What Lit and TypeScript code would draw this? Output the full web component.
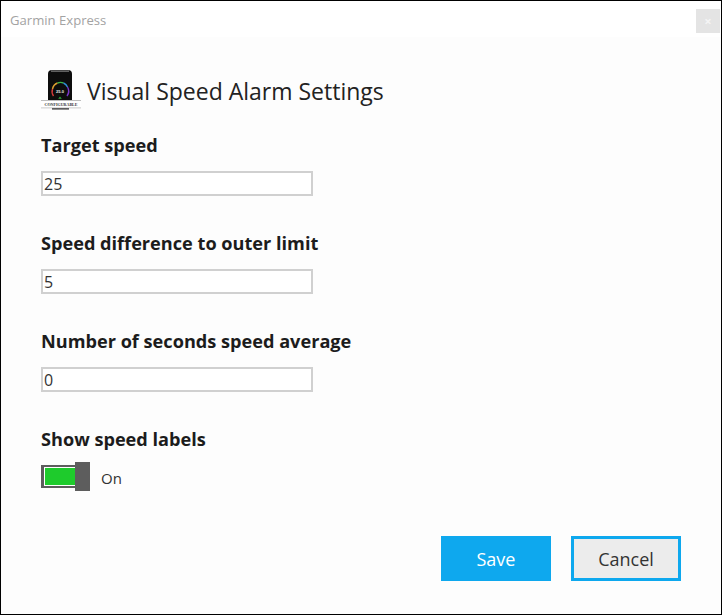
import { LitElement, html, css } from "lit";
import { customElement } from "lit/decorators.js";

const FIELDS = [
  { label: "Target speed", value: "25" },
  { label: "Speed difference to outer limit", value: "5" },
  { label: "Number of seconds speed average", value: "0" },
];

@customElement("app-root")
export class AppRoot extends LitElement {
  static styles = css`
    :host {
      display: block;
      width: 722px;
      height: 615px;
      box-sizing: border-box;
      border: 1px solid #000;
      background: #fdfdfd;
      font-family: "Open Sans", "Noto Sans", sans-serif;
      color: #1c1c1c;
      overflow: hidden;
    }
    .win {
      display: flex;
      flex-direction: column;
      height: 100%;
    }
    .titlebar {
      display: flex;
      justify-content: space-between;
      align-items: flex-start;
      height: 36px;
      flex: none;
      background: #fff;
      padding: 8px 1px 0 9px;
      box-sizing: border-box;
    }
    .title {
      font-size: 13.1px;
      line-height: 22px;
      color: #a3a3a3;
    }
    .close {
      width: 24px;
      height: 24px;
      background: #e4e4e4;
      color: #f4f4f4;
      font-size: 13px;
      line-height: 24px;
      text-align: center;
      font-weight: 700;
    }
    .body {
      flex: 1;
      display: flex;
      flex-direction: column;
      padding: 33px 40px 33px 40px;
    }
    .heading {
      display: flex;
      align-items: center;
      gap: 6px;
      height: 41px;
    }
    .heading h1 {
      margin: 0;
      padding-top: 1px;
      font-size: 23px;
      font-weight: 400;
      line-height: 41px;
      color: #222;
    }
    .icon {
      width: 40px;
      height: 41px;
      display: block;
    }
    .fields {
      margin-top: 22px;
    }
    .field {
      display: flex;
      flex-direction: column;
      height: 98px;
    }
    .label {
      font-size: 18.15px;
      font-weight: 700;
      line-height: 24px;
      height: 24px;
    }
    .input {
      margin-top: 14px;
      width: 272px;
      height: 25px;
      box-sizing: border-box;
      border: 2px solid #d0d0d0;
      background: #fff;
      font-size: 16px;
      line-height: 23px;
      padding-left: 1px;
      color: #333;
    }
    .toggle-row {
      display: flex;
      align-items: center;
      gap: 12px;
      margin-top: 11px;
      height: 29px;
    }
    .toggle {
      width: 49px;
      height: 29px;
      display: flex;
      align-items: center;
    }
    .track {
      width: 34px;
      height: 23px;
      box-sizing: border-box;
      border: solid #5d5d5d;
      border-width: 2px 0 2px 3px;
      background: #1ecb2c;
      box-shadow: inset 1px 1px 0 #fff, inset 0 -1px 0 #fff;
    }
    .thumb {
      width: 15px;
      height: 29px;
      background: #5d5d5d;
    }
    .state {
      font-size: 15px;
      color: #333;
      padding-top: 3px;
      margin-left: -1px;
    }
    .actions {
      margin-top: auto;
      display: flex;
      justify-content: flex-end;
      gap: 20px;
    }
    .btn {
      width: 110px;
      height: 45px;
      box-sizing: border-box;
      font-size: 18px;
      display: flex;
      align-items: center;
      justify-content: center;
    }
    .save {
      background: #0ea8ee;
      color: #fff;
    }
    .cancel {
      background: #ececec;
      border: 3px solid #0ea8ee;
      color: #333;
    }
    .badge {
      font-family: "Liberation Serif", serif;
      font-weight: 700;
      font-size: 4.6px;
      fill: #333;
    }
    .readout {
      font-family: "Liberation Sans", sans-serif;
      font-weight: 700;
      font-size: 4px;
      fill: #eee;
    }
  `;

  render() {
    return html`
      <div class="win">
        <div class="titlebar">
          <div class="title">Garmin Express</div>
          <div class="close">×</div>
        </div>
        <div class="body">
          <div class="heading">
            <svg class="icon" viewBox="0 0 40 41" aria-hidden="true">
              <path d="M7 30V4q0-4 4-4h16q4 0 4 4v26z" fill="#0d0d0d" />
              <rect x="10" y="0.6" width="18" height="1" fill="#999" />
              <path d="M12.5 26a8 8 0 0 1 -1-7" fill="none" stroke="#d63a3a" stroke-width="1.4" />
              <path d="M11.5 19a8 8 0 0 1 5-6" fill="none" stroke="#e0a030" stroke-width="1.4" />
              <path d="M16.5 13a8 8 0 0 1 6 0" fill="none" stroke="#3cb54a" stroke-width="1.4" />
              <path d="M22.5 13a8 8 0 0 1 4 4" fill="none" stroke="#2f8fd8" stroke-width="1.4" />
              <path d="M26.5 17a8 8 0 0 1 -.5 9" fill="none" stroke="#7a35c8" stroke-width="1.4" />
              <text class="readout" x="19" y="22.5" text-anchor="middle">25.0</text>
              <path d="M19 26.5l1.8 2.3h-3.6z" fill="#2fae3c" />
              <rect x="0" y="30" width="40" height="1" fill="#bdbdbd" />
              <rect x="0" y="31" width="40" height="7" fill="#fff" />
              <text class="badge" x="20" y="36.4" text-anchor="middle" textLength="33" lengthAdjust="spacingAndGlyphs">CONFIGURABLE</text>
              <rect x="0" y="37.5" width="40" height="0.8" fill="#bdbdbd" />
              <rect x="11" y="38.3" width="17" height="1.2" fill="#222" />
            </svg>
            <h1>Visual Speed Alarm Settings</h1>
          </div>
          <div class="fields">
            ${FIELDS.map(
              (f) => html`
                <div class="field">
                  <div class="label">${f.label}</div>
                  <div class="input">${f.value}</div>
                </div>
              `
            )}
            <div class="label">Show speed labels</div>
            <div class="toggle-row">
              <div class="toggle">
                <div class="track"></div>
                <div class="thumb"></div>
              </div>
              <div class="state">On</div>
            </div>
          </div>
          <div class="actions">
            <div class="btn save">Save</div>
            <div class="btn cancel">Cancel</div>
          </div>
        </div>
      </div>
    `;
  }
}
